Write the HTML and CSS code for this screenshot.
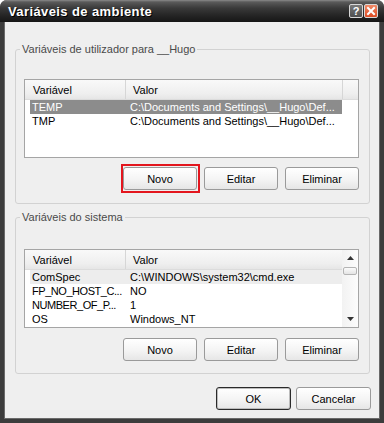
FILE: index.html
```html
<!DOCTYPE html>
<html>
<head>
<meta charset="utf-8">
<link rel="stylesheet" href="styles.css">
</head>
<body>
<div class="window">
  <div class="titlebar">
    <span class="title">Variáveis de ambiente</span>
    <div class="tbtns">
      <span class="tb help">?</span>
      <span class="tb close"><svg width="10" height="10" viewBox="0 0 10 10"><path d="M2 2 L8 8 M8 2 L2 8" stroke="#fff" stroke-width="2" stroke-linecap="square"/></svg></span>
    </div>
  </div>
  <div class="client">
    <fieldset class="group g1">
      <legend>Variáveis de utilizador para __Hugo</legend>
      <div class="listview">
        <div class="lvmain">
          <div class="hdr"><div class="hc h1">Variável</div><div class="hc h2">Valor</div><div class="hc h3"></div></div>
          <div class="row sel"><span class="c1">TEMP</span><span class="c2">C:\Documents and Settings\__Hugo\Def...</span></div>
          <div class="row"><span class="c1">TMP</span><span class="c2">C:\Documents and Settings\__Hugo\Def...</span></div>
        </div>
      </div>
      <div class="btnrow">
        <span class="mark"><button class="btn">Novo</button></span>
        <button class="btn">Editar</button>
        <button class="btn">Eliminar</button>
      </div>
    </fieldset>
    <fieldset class="group g2">
      <legend>Variáveis do sistema</legend>
      <div class="listview">
        <div class="lvmain">
          <div class="hdr"><div class="hc h1">Variável</div><div class="hc h2 last">Valor</div></div>
          <div class="row inactive"><span class="c1">ComSpec</span><span class="c2">C:\WINDOWS\system32\cmd.exe</span></div>
          <div class="row"><span class="c1 tight">FP_NO_HOST_C...</span><span class="c2">NO</span></div>
          <div class="row"><span class="c1 tight">NUMBER_OF_P...</span><span class="c2">1</span></div>
          <div class="row"><span class="c1">OS</span><span class="c2">Windows_NT</span></div>
        </div>
        <div class="sb">
          <div class="sbarrow"><svg width="7" height="4" viewBox="0 0 7 4"><path d="M3.5 0 L7 4 L0 4 Z" fill="#333"/></svg></div>
          <div class="sbthumb"></div>
          <div class="sbtrack"></div>
          <div class="sbarrow down"><svg width="7" height="4" viewBox="0 0 7 4"><path d="M0 0 L7 0 L3.5 4 Z" fill="#333"/></svg></div>
        </div>
      </div>
      <div class="btnrow">
        <button class="btn">Novo</button>
        <button class="btn">Editar</button>
        <button class="btn">Eliminar</button>
      </div>
    </fieldset>
    <div class="footer">
      <button class="btn wide default">OK</button>
      <button class="btn wide">Cancelar</button>
    </div>
  </div>
</div>
</body>
</html>
```
FILE: styles.css
```css
html, body {
  margin: 0;
  padding: 0;
  background: #ffffff;
}

.window {
  width: 384px;
  height: 423px;
  display: flex;
  flex-direction: column;
  background: #3a3a3a;
  border-radius: 7px 7px 0 0;
  overflow: hidden;
  font-family: "Liberation Sans", Arial, sans-serif;
  font-size: 11px;
  color: #000;
}

.titlebar {
  height: 22px;
  flex: none;
  display: flex;
  align-items: center;
  padding: 0 6px 0 8px;
  background: linear-gradient(#8a8a8a 0px, #5a5a5a 2px, #3a3a3a 8px, #262626 15px, #161616 22px);
  color: #fff;
}

.title {
  flex: 1;
  font-weight: bold;
  font-size: 13px;
  letter-spacing: 0.4px;
  text-shadow: 1px 1px 0 #000;
}

.tbtns {
  display: flex;
  gap: 1px;
}

.tb {
  width: 14px;
  height: 14px;
  box-sizing: border-box;
  border: 1px solid #d8d8d8;
  border-radius: 2px;
  display: flex;
  align-items: center;
  justify-content: center;
}

.help {
  background: linear-gradient(#7a7a7a, #4e4e4e);
  color: #fff;
  font-weight: bold;
  font-size: 11px;
  line-height: 12px;
}

.close {
  background: linear-gradient(#f08a68, #dc4a22);
}

.client {
  flex: 1;
  background: #efefef;
  border: 4px solid #3c3c3c;
  border-top: 0;
  box-shadow: inset 1px 0 0 #6a6a6a, inset -1px 0 0 #6a6a6a, inset 0 -1px 0 #6a6a6a;
  display: flex;
  flex-direction: column;
}

.group {
  margin: 21px 10px 0 11px;
  padding: 23px 10px 13px 8px;
  border: 1px solid #d2d2d2;
  border-radius: 3px;
  min-width: 0;
}

.g2 {
  margin-top: 7px;
  padding-top: 25px;
  padding-bottom: 12px;
}

.group legend {
  padding: 0 2px;
  margin-left: -4px;
  color: #4a4a4a;
  line-height: 13px;
  font-size: 11px;
}

.listview {
  height: 79px;
  box-sizing: border-box;
  border: 1px solid #a5a5a5;
  background: #fff;
  overflow: hidden;
  display: flex;
}

.lvmain {
  flex: 1;
  min-width: 0;
}

.hdr {
  display: flex;
  height: 20px;
  box-sizing: border-box;
  background: linear-gradient(#f9f9f9, #efefef 70%, #e6e6e6);
  border-bottom: 1px solid #dcdcdc;
}

.hc {
  display: flex;
  align-items: center;
  box-sizing: border-box;
  border-right: 1px solid #d6d6d6;
  white-space: nowrap;
}

.h1 {
  width: 101px;
  padding-left: 8px;
}

.h2 {
  width: 217px;
  padding-left: 7px;
}

.h2.last {
  flex: 1;
  border-right: 0;
}

.h3 {
  flex: 1;
  border-right: 0;
}

.row {
  display: flex;
  height: 14px;
  line-height: 14px;
  margin-left: 5px;
  width: 312px;
  white-space: nowrap;
}

.row .c1 {
  width: 95px;
  flex: none;
  box-sizing: border-box;
  padding-left: 2px;
  overflow: hidden;
}

.row .c1.tight {
  letter-spacing: -0.45px;
}

.row .c2 {
  flex: 1;
  padding-left: 5px;
  overflow: hidden;
}

.row.sel {
  background: #8c8c8c;
  color: #fff;
}

.row.inactive {
  background: #ededed;
}

.sb {
  width: 16px;
  flex: none;
  display: flex;
  flex-direction: column;
  background: linear-gradient(90deg, #f2f2f2, #fcfcfc);
}

.sbarrow {
  height: 16px;
  flex: none;
  display: flex;
  align-items: center;
  justify-content: center;
}

.sbthumb {
  height: 8px;
  margin: 1px 1px 0 1px;
  box-sizing: border-box;
  border: 1px solid #b4b4b4;
  border-radius: 2px;
  background: linear-gradient(#fbfbfb, #e4e4e4);
}

.sbtrack {
  flex: 1;
}

.btnrow {
  display: flex;
  justify-content: flex-end;
  gap: 7px;
  margin-top: 9px;
}

.g2 .btnrow {
  margin-top: 10px;
}

.btn {
  width: 74px;
  height: 23px;
  box-sizing: border-box;
  border: 1px solid #9a9a9a;
  border-radius: 3px;
  background: linear-gradient(#ffffff, #f4f4f4 55%, #e6e6e6);
  font-family: inherit;
  font-size: 11px;
  color: #000;
  padding: 0;
}

.mark {
  display: flex;
  border: 2px solid #e3161e;
  padding: 1px 1px 1px 0;
  margin: -3px -3px -3px -2px;
}

.btn.wide {
  width: 75px;
}

.btn.default {
  border-color: #2a2a2a;
  box-shadow: inset 0 0 0 1px #bcbcbc;
}

.footer {
  display: flex;
  justify-content: flex-end;
  gap: 5px;
  margin: 13px 9px 0 0;
}
```
